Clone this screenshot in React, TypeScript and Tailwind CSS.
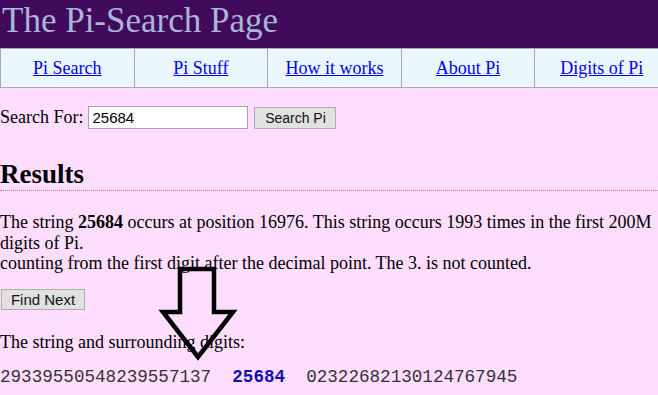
const navItems = ['Pi Search', 'Pi Stuff', 'How it works', 'About Pi', 'Digits of Pi']

export default function App() {
  return (
    <div className="relative w-[658px] h-[395px] overflow-hidden bg-[#ffddff] text-black font-['Liberation_Serif',serif]">
      {/* header */}
      <div className="h-[48px] bg-[#410a5b] pl-[2px] pt-[3px]">
        <h1 className="text-[35px] leading-[36px] text-[#a9b6d9] font-normal">The Pi-Search Page</h1>
      </div>

      {/* nav tabs */}
      <div className="flex w-[668px] h-[40px] bg-[#ebf7ff] border-t border-b border-[#a8a8a8]">
        {navItems.map(label => (
          <div
            key={label}
            className="flex-1 flex items-center justify-center border-l border-[#a8a8a8]"
          >
            <a href="#" className="text-[18px] text-[#0000ee] underline">{label}</a>
          </div>
        ))}
      </div>

      {/* search form */}
      <div className="flex items-center mt-[18px] h-[23px]">
        <span className="text-[18px]">Search For:</span>
        <input
          defaultValue="25684"
          className="ml-[5px] w-[160px] h-[23px] border border-[#a6a6a6] bg-white px-[3px] text-[15px] font-['Liberation_Sans',sans-serif] outline-none"
        />
        <button className="ml-[6px] w-[82px] h-[22px] bg-[#e1e1e1] border border-[#adadad] text-[14px] text-[#111] font-['Liberation_Sans',sans-serif]">
          Search Pi
        </button>
      </div>

      {/* results */}
      <h2 className="mt-[30px] text-[27px] leading-[30px] font-bold pb-[1px] border-b border-dotted border-[#f0607e]">
        Results
      </h2>
      <p className="mt-[21px] text-[18px] leading-[20.5px]">
        The string <b>25684</b> occurs at position 16976. This string occurs 1993 times in the first 200M digits of Pi.
        <br />
        counting from the first digit after the decimal point. The 3. is not counted.
      </p>
      <button className="mt-[15px] ml-[1px] w-[84px] h-[21px] bg-[#e1e1e1] border border-[#adadad] text-[15px] text-[#111] font-['Liberation_Sans',sans-serif] leading-none">
        Find Next
      </button>
      <p className="mt-[20px] text-[18px] leading-[20.5px]">The string and surrounding digits:</p>
      <div className="mt-[15px] whitespace-pre font-['Liberation_Mono',monospace] text-[17.6px] leading-[20px] text-[#333]">
        29339550548239557137  <b className="text-[#1010b0]">25684</b>  02322682130124767945
      </div>

      {/* arrow overlay */}
      <svg className="absolute left-0 top-0" width="658" height="395" viewBox="0 0 658 395">
        <path
          d="M180 269 L214 269 L214 312 L233 312 L198 357 L163 312 L180 312 Z"
          fill="none"
          stroke="#000"
          strokeWidth="4.5"
          strokeLinejoin="miter"
        />
      </svg>
    </div>
  )
}
